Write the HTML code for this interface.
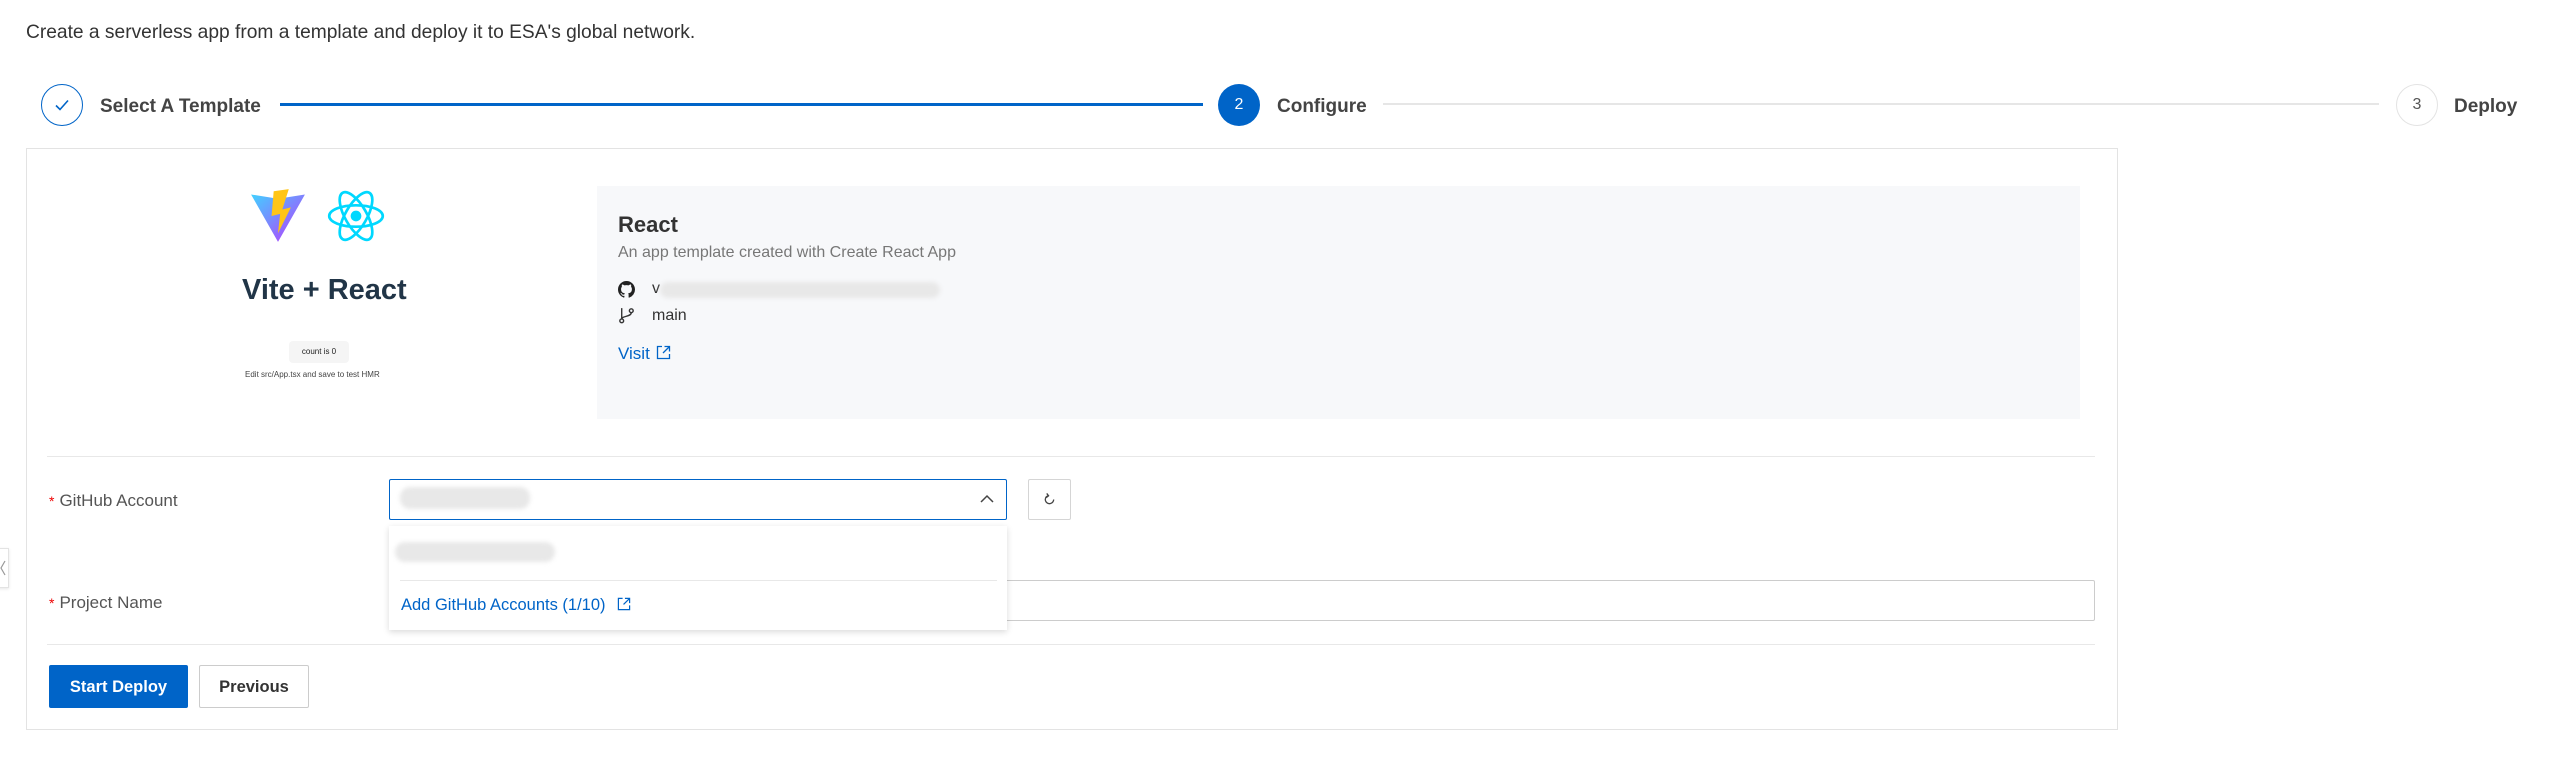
<!DOCTYPE html>
<html><head><meta charset="utf-8"><style>
*{box-sizing:border-box;margin:0;padding:0}
body{width:2564px;height:766px;background:#fff;font-family:"Liberation Sans",sans-serif;color:#333;position:relative;overflow:hidden}
.a{position:absolute}
.lbl{font-size:17px;color:#555}
.star{color:#e00;font-size:14px;margin-right:5px}
.blur{background:#e8e8e8;border-radius:10px;filter:blur(2px)}
</style></head><body>
<div class="a" style="left:26px;top:22px;font-size:19.2px;color:#333">Create a serverless app from a template and deploy it to ESA's global network.</div>

<div class="a" style="left:41px;top:84px;width:42px;height:42px;border:1.5px solid #0064c8;border-radius:50%"></div>
<svg class="a" style="left:54px;top:97px" width="16" height="16" viewBox="0 0 16 16"><path d="M2 8.5l4 4 8-9" fill="none" stroke="#0064c8" stroke-width="1.6"/></svg>
<div class="a" style="left:100px;top:96px;font-size:19px;font-weight:bold;color:#444">Select A Template</div>
<div class="a" style="left:280px;top:103px;width:923px;height:3px;background:#0064c8"></div>
<div class="a" style="left:1218px;top:84px;width:42px;height:42px;background:#0064c8;border-radius:50%;color:#fff;font-size:16px;text-align:center;line-height:42px">2</div>
<div class="a" style="left:1277px;top:96px;font-size:19px;font-weight:bold;color:#444">Configure</div>
<div class="a" style="left:1383px;top:103px;width:996px;height:2px;background:#e6e6e6"></div>
<div class="a" style="left:2396px;top:84px;width:42px;height:42px;border:1.5px solid #e3e3e3;border-radius:50%;color:#555;font-size:16px;text-align:center;line-height:39px">3</div>
<div class="a" style="left:2454px;top:96px;font-size:19px;font-weight:bold;color:#444">Deploy</div>

<div class="a" style="left:26px;top:148px;width:2092px;height:582px;border:1.5px solid #e3e3e3"></div>

<svg class="a" style="left:250px;top:188px" width="56" height="56" viewBox="0 0 52 52"><defs><linearGradient id="v" x1="0" y1="0" x2="1" y2="1"><stop offset="0" stop-color="#41d1ff"/><stop offset="1" stop-color="#bd34fe"/></linearGradient></defs><path d="M1 6L26 50 51 6 26 10z" fill="url(#v)"/><path d="M22 3L36 1 30 20 38 18 26 42 28 24 20 26z" fill="#ffc517"/></svg>
<svg class="a" style="left:326px;top:186px" width="60" height="60" viewBox="-28 -28 56 56"><g fill="none" stroke="#00d8ff" stroke-width="2.5"><ellipse rx="25" ry="10"/><ellipse rx="25" ry="10" transform="rotate(60)"/><ellipse rx="25" ry="10" transform="rotate(120)"/></g><circle r="5" fill="#00d8ff"/></svg>
<div class="a" style="left:242px;top:274px;font-size:29px;font-weight:bold;color:#213547">Vite + React</div>
<div class="a" style="left:289px;top:341px;width:60px;height:22px;background:#f5f5f5;border-radius:4px;font-size:8px;text-align:center;line-height:22px;color:#222">count is 0</div>
<div class="a" style="left:245px;top:370px;font-size:8px;color:#444">Edit src/App.tsx and save to test HMR</div>

<div class="a" style="left:597px;top:186px;width:1483px;height:233px;background:#f7f8fa"></div>
<div class="a" style="left:618px;top:212px;font-size:22px;font-weight:bold;color:#333">React</div>
<div class="a" style="left:618px;top:244px;font-size:16px;color:#777">An app template created with Create React App</div>
<svg class="a" style="left:618px;top:281px" width="17" height="17" viewBox="0 0 16 16"><path fill="#222" d="M8 0C3.58 0 0 3.58 0 8c0 3.54 2.290 6.53 5.47 7.59.4.07.55-.17.55-.38v-1.34c-2.23.48-2.700-1.07-2.700-1.07-.36-.92-.89-1.17-.89-1.17-.73-.5.05-.49.05-.49.8.06 1.23.83 1.23.83.72 1.22 1.87.87 2.33.66.07-.52.28-.87.5-1.070-1.78-.2-3.65-.89-3.65-3.95 0-.87.31-1.59.82-2.150-.08-.2-.36-1.020.08-2.12 0 0 .67-.21 2.2.82a7.6 7.6 0 014 0c1.53-1.04 2.2-.82 2.2-.82.44 1.1.16 1.92.08 2.12.51.56.82 1.27.82 2.15 0 3.07-1.87 3.75-3.65 3.95.29.25.54.73.54 1.48v2.2c0 .21.15.46.55.38A8 8 0 0016 8c0-4.42-3.58-8-8-8z"/></svg>
<div class="a" style="left:652px;top:280px;font-size:16px;color:#333">v</div>
<div class="a blur" style="left:660px;top:282px;width:280px;height:16px"></div>
<svg class="a" style="left:618px;top:307px" width="17" height="17" viewBox="0 0 16 16" fill="none" stroke="#333" stroke-width="1.3"><circle cx="3.5" cy="13" r="1.8"/><circle cx="12.5" cy="3.5" r="1.8"/><path d="M3.5 1v10M12.5 5.3c0 4-9 3-9 6"/></svg>
<div class="a" style="left:652px;top:307px;font-size:16px;color:#333">main</div>
<div class="a" style="left:618px;top:344px;font-size:17px;color:#0064c8">Visit</div>
<svg class="a" style="left:656px;top:345px" width="15" height="15" viewBox="0 0 15 15" fill="none" stroke="#0064c8" stroke-width="1.3"><path d="M6 1.5H1.5v12h12V9M8.5 1.5h5v5M13.5 1.5L7 8"/></svg>

<div class="a" style="left:47px;top:456px;width:2048px;height:1px;background:#e8e8e8"></div>
<div class="a lbl" style="left:49px;top:491px"><span class="star">*</span>GitHub Account</div>
<div class="a" style="left:389px;top:479px;width:618px;height:41px;border:1.5px solid #0064c8;border-radius:2px"></div>
<div class="a blur" style="left:400px;top:487px;width:130px;height:22px"></div>
<svg class="a" style="left:980px;top:494px" width="14" height="10" viewBox="0 0 14 10"><path d="M1 8l6-6 6 6" fill="none" stroke="#444" stroke-width="1.5"/></svg>
<div class="a" style="left:1028px;top:479px;width:43px;height:41px;border:1.2px solid #d5d5d5;border-radius:2px"></div>
<svg class="a" style="left:1043px;top:493px" width="13" height="13" viewBox="0 0 14 14"><path d="M11.5 7A4.5 4.5 0 115 3" fill="none" stroke="#444" stroke-width="1.4"/><path d="M4 0.5l2 2.5-2.5 2" fill="none" stroke="#444" stroke-width="1.4"/></svg>

<div class="a lbl" style="left:49px;top:593px"><span class="star">*</span>Project Name</div>
<div class="a" style="left:389px;top:580px;width:1706px;height:41px;border:1.2px solid #ccc;border-radius:2px"></div>

<div class="a" style="left:389px;top:526px;width:618px;height:104px;background:#fff;box-shadow:0 2px 6px rgba(0,0,0,.15)"></div>
<div class="a blur" style="left:395px;top:542px;width:160px;height:20px"></div>
<div class="a" style="left:400px;top:580px;width:597px;height:1px;background:#e8e8e8"></div>
<div class="a" style="left:401px;top:596px;font-size:16.5px;color:#0064c8">Add GitHub Accounts (1/10)</div>
<svg class="a" style="left:617px;top:597px" width="14" height="14" viewBox="0 0 15 15" fill="none" stroke="#0064c8" stroke-width="1.3"><path d="M6 1.5H1.5v12h12V9M8.5 1.5h5v5M13.5 1.5L7 8"/></svg>

<div class="a" style="left:47px;top:644px;width:2048px;height:1px;background:#e8e8e8"></div>
<div class="a" style="left:49px;top:665px;width:139px;height:43px;background:#0064c8;border-radius:2px;color:#fff;font-weight:bold;font-size:16.5px;text-align:center;line-height:45px">Start Deploy</div>
<div class="a" style="left:199px;top:665px;width:110px;height:43px;border:1.2px solid #ccc;border-radius:2px;color:#333;font-weight:bold;font-size:16.5px;text-align:center;line-height:43px">Previous</div>

<div class="a" style="left:-4px;top:548px;width:13px;height:40px;background:#fff;border:1px solid #e3e3e3;box-shadow:0 1px 3px rgba(0,0,0,.1)"></div>
<svg class="a" style="left:0;top:560px" width="6" height="16" viewBox="0 0 6 16"><path d="M5 1L1 8l4 7" fill="none" stroke="#999" stroke-width="1.2"/></svg>
</body></html>
